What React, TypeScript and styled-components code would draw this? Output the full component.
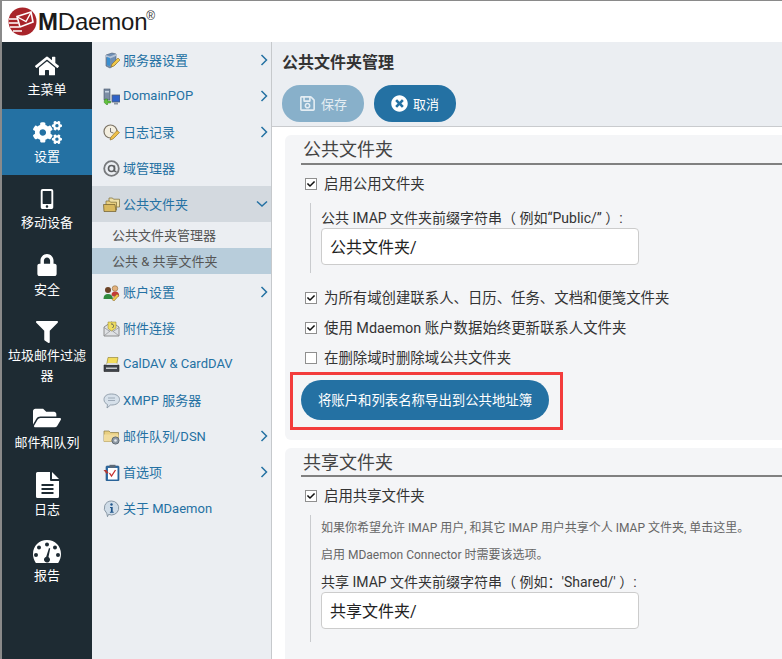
import styled, { createGlobalStyle } from "styled-components";
import type { ReactNode } from "react";
import {
  FaHome,
  FaCogs,
  FaMobileAlt,
  FaLock,
  FaFilter,
  FaFolderOpen,
  FaRegSave,
  FaTimesCircle,
  FaCheck,
} from "react-icons/fa";

const GlobalStyle = createGlobalStyle`
  html, body { margin: 0; padding: 0; background: #fff; }
  body {
    font-family: Roboto, "Noto Sans CJK SC", sans-serif;
    color: #333;
  }
  * { box-sizing: border-box; }
`;

const Page = styled.div`
  width: 782px;
  height: 659px;
  overflow: hidden;
  display: flex;
  flex-direction: column;
  border-top: 1px solid #8a8a8a;
  border-left: 2px solid #8a8a8a;
`;

const Header = styled.header`
  height: 41px;
  flex: none;
  display: flex;
  align-items: center;
  padding-left: 6px;
`;

const LogoText = styled.div`
  margin-left: 1px;
  font-family: "Liberation Sans", sans-serif;
  font-size: 24px;
  line-height: 28px;
  color: #1a1a1a;
  display: flex;
  letter-spacing: -0.2px;
  b { font-weight: 700; }
  sup {
    font-size: 12px;
    line-height: 12px;
    margin: 2px 0 0 -1px;
    color: #333;
  }
`;

const Body = styled.div`
  flex: 1;
  display: flex;
  min-height: 0;
`;

const Nav = styled.nav`
  width: 90px;
  flex: none;
  background: #1e2b33;
`;

const NavItem = styled.div<{ $active?: boolean }>`
  padding: 10px 0 8.6px;
  text-align: center;
  color: #fff;
  background: ${(p) => (p.$active ? "#2471a3" : "transparent")};
`;

const NavIcon = styled.div`
  height: 28px;
  padding-bottom: 1px;
  display: flex;
  align-items: center;
  justify-content: center;
  font-size: 24px;
`;

const NavLabel = styled.div`
  font-size: 13px;
  line-height: 20px;
`;

const Side = styled.aside`
  width: 180px;
  flex: none;
  background: #ebeef2;
  border-right: 1px solid #c6c9cc;
`;

const MenuRow = styled.div<{ $open?: boolean }>`
  height: 36px;
  display: flex;
  align-items: center;
  padding: 0 3px 0 11px;
  font-size: 13px;
  color: #2471a3;
  background: ${(p) => (p.$open ? "#d3d9df" : "transparent")};
`;

const MenuIcon = styled.svg`
  width: 17px;
  height: 17px;
  flex: none;
  margin-right: 3px;
`;

const MenuText = styled.span`
  flex: 1;
  margin-top: -2px;
`;

const SubRow = styled.div<{ $current?: boolean }>`
  height: 26px;
  display: flex;
  align-items: center;
  padding: 0 0 2px 20px;
  font-size: 13px;
  color: #555;
  background: ${(p) => (p.$current ? "#b8cddb" : "transparent")};
`;

const Main = styled.main`
  flex: 1;
  min-width: 0;
`;

const Toolbar = styled.div`
  height: 85px;
  background: #ebeef2;
  border-bottom: 1px solid #c9cbce;
  padding: 10px 10px 0;
`;

const Title = styled.h1`
  margin: 0 0 11px;
  font-size: 16px;
  line-height: 22px;
  font-weight: 700;
  color: #333;
`;

const Buttons = styled.div`
  display: flex;
  gap: 10px;
`;

const ToolButton = styled.button<{ $disabled?: boolean }>`
  width: 82px;
  height: 37px;
  border: 0;
  padding: 0;
  border-radius: 18px;
  display: flex;
  align-items: center;
  justify-content: center;
  gap: 5px;
  font: inherit;
  font-size: 13px;
  color: ${(p) => (p.$disabled ? "#e4edf3" : "#fff")};
  background: ${(p) => (p.$disabled ? "#88b0ca" : "#2471a3")};
  svg {
    font-size: 17px;
  }
`;

const Content = styled.div`
  padding: 8px 0 0 13px;
`;

const Section = styled.section<{ $h: number }>`
  height: ${(p) => p.$h}px;
  margin-bottom: 8px;
  padding-left: 16px;
  background: #f4f5f7;
  border-radius: 6px 0 0 6px;
`;

const SectionHead = styled.h2<{ $h: number }>`
  margin: 0;
  height: ${(p) => p.$h}px;
  border-bottom: 2px solid #808080;
  padding-left: 2px;
  font-size: 18px;
  line-height: 30px;
  font-weight: 400;
  color: #444;
`;

const CheckRow = styled.label<{ $gapTop: number }>`
  display: flex;
  align-items: center;
  gap: 7px;
  height: 20px;
  margin: ${(p) => p.$gapTop}px 0 0 4px;
  font-size: 14.4px;
  color: #333;
  span:last-child {
    margin-top: -3px;
  }
`;

const Box = styled.span`
  width: 12px;
  height: 12px;
  flex: none;
  display: flex;
  align-items: center;
  justify-content: center;
  background: #fff;
  border: 1px solid #8f8f8f;
  font-size: 8px;
  color: #111;
`;

const Indent = styled.div<{ $h: number; $top: number }>`
  height: ${(p) => p.$h}px;
  margin: ${(p) => p.$top}px 0 0 9px;
  padding-left: 10px;
  border-left: 1px solid #c9cbce;
`;

const FieldLabel = styled.div`
  padding-top: 5px;
  font-size: 14px;
  line-height: 20px;
  color: #333;
`;

const TextBox = styled.div`
  width: 318px;
  height: 37px;
  padding-left: 8px;
  background: #fff;
  border: 1px solid #ccc;
  border-radius: 4px;
  font-size: 16px;
  line-height: 37px;
  color: #222;
`;

const Hint = styled.p<{ $h: number }>`
  margin: 0;
  height: ${(p) => p.$h}px;
  font-size: 12px;
  line-height: 27px;
  color: #666;
  white-space: nowrap;
`;

const ExportButton = styled.button`
  position: relative;
  display: block;
  width: 248px;
  height: 40px;
  margin-top: 12px;
  padding: 0 0 2px;
  border: 0;
  border-radius: 20px;
  background: #2471a3;
  color: #fff;
  font: inherit;
  font-size: 13.4px;
  /* red note drawn over the screenshot */
  &::after {
    content: "";
    position: absolute;
    left: -11px;
    right: -14px;
    top: -8px;
    bottom: -10px;
    border: 3px solid #f33c3c;
  }
`;

const icons: Record<string, ReactNode> = {
  server: (
    <>
      <path d="M3 3 l6-2 l4 1 v10 l-6 4 l-4-2z" fill="#6f8fb5" stroke="#4a5a70" strokeWidth=".6" />
      <path d="M3 3 l4 1.500 l6-2.500 v2 l-6 2.500 l-4-1.500z" fill="#b5c4d8" />
      <path d="M4 5 l3 1 v8 l-3-1z" fill="#3a8fd0" />
      <path d="M8 15 l1-3 l6-6 l2 2 l-6 6z" fill="#f1c84a" stroke="#8a6a20" strokeWidth=".6" />
    </>
  ),
  domain: (
    <>
      <rect x="1" y="1" width="6" height="11" fill="#7d8ea6" stroke="#44546a" strokeWidth=".6" />
      <rect x="2" y="3" width="4" height="1.500" fill="#c8d4e2" />
      <rect x="9" y="7" width="8" height="7" fill="#2f62c8" stroke="#56606e" strokeWidth=".8" />
      <rect x="11" y="14.500" width="4" height="2" fill="#8b95a2" />
      <path d="M2 11 h2.500 v2 h3 v2 h-3 v2.500 l-3.500-3.200z" fill="#62c23e" stroke="#2f7d1e" strokeWidth=".5" />
    </>
  ),
  clock: (
    <>
      <circle cx="7.500" cy="7.500" r="6.500" fill="#f4efe0" stroke="#7c7466" strokeWidth="1.200" />
      <path d="M7.500 4 v4 l3 1" fill="none" stroke="#555" strokeWidth=".8" />
      <path d="M7 16 l1-3 l6-6.500 l2.500 2 l-6.500 6.500z" fill="#eec04a" stroke="#8a6a20" strokeWidth=".6" />
    </>
  ),
  at: (
    <>
      <circle cx="8.500" cy="8.500" r="7.300" fill="none" stroke="#77797c" strokeWidth="1.800" />
      <circle cx="8.500" cy="8.500" r="3" fill="none" stroke="#5c5e60" strokeWidth="1.600" />
      <path d="M11.500 5.500 v4.500 q0 2 2 1.500" fill="none" stroke="#5c5e60" strokeWidth="1.400" />
    </>
  ),
  folders: (
    <>
      <path d="M6 2 h3.500 l1 1.200 h6 v7.800 h-10.500z" fill="#efe0a6" stroke="#7b6a34" strokeWidth=".7" />
      <path d="M3 5 h3.500 l1 1.200 h6 v7.800 h-10.500z" fill="#e8cf80" stroke="#7b6a34" strokeWidth=".7" />
      <path d="M0.500 8.500 h11.500 l1 7 h-12z" fill="#d9b95e" stroke="#6b5a2a" strokeWidth=".7" />
    </>
  ),
  people: (
    <>
      <circle cx="5" cy="6" r="3" fill="#6b4226" />
      <path d="M0.500 15 q0-5 4.500-5 t5 5z" fill="#2f8a3e" />
      <circle cx="12" cy="4.500" r="2.800" fill="#e3b27d" stroke="#7b5a2a" strokeWidth=".5" />
      <path d="M8.500 11 q0-3.500 3.500-3.500 t4 3v2h-6z" fill="#c23b36" />
      <path d="M9 15.500 l5-5.500 l2 1.500 l-5 5.500z" fill="#f0c64a" stroke="#7a5f20" strokeWidth=".5" />
    </>
  ),
  attach: (
    <>
      <path d="M1 7 l7.500-5 l7.500 5 v9 h-15z" fill="#dfe1e4" stroke="#777" strokeWidth=".8" />
      <path d="M1.500 15.500 l6-5 h1.500 l6.500 5 M1 7.500 l6 4 M16 7.500 l-6 4" fill="none" stroke="#8c8f93" strokeWidth=".7" />
      <path d="M5 2 h8 v6 l-4.500 3 l-3.500-2.500z" fill="#eedd62" stroke="#8c7c2c" strokeWidth=".5" />
      <path d="M8 4 a2 2 0 0 1 2.500 2.500 l-1 1.500" fill="none" stroke="#555" strokeWidth=".9" />
    </>
  ),
  printer: (
    <>
      <path d="M5 1.500 h10 l-1.500 8 h-10z" fill="#f3dd5c" stroke="#8a7a2c" strokeWidth=".6" />
      <path d="M1 9 h15 v6.500 h-15z" fill="#3f434a" stroke="#222" strokeWidth=".6" />
      <path d="M3 9 l1.500-2 h9 l1.500 2z" fill="#d8dadd" />
      <rect x="3" y="11.500" width="11" height="1.500" fill="#c6c9cc" />
    </>
  ),
  bubble: (
    <>
      <path d="M8.500 2 c4.500 0 8 2 8 5.500 s-3.500 5.500-8 5.500 l-1 0 l-3.500 3 l.5-3.500 c-2-1-3.500-2.500-3.500-5 c0-3.500 3-5.500 7.500-5.500z" fill="#d6e0ea" stroke="#8b98a6" strokeWidth=".9" />
      <path d="M5 6 h7 M5 8.500 h7" stroke="#97a4b2" strokeWidth=".9" />
    </>
  ),
  queue: (
    <>
      <path d="M1 3 h5 l1.500 1.500 h8 v9 h-14.500z" fill="#e9d083" stroke="#8a7a44" strokeWidth=".7" />
      <path d="M1 6.500 h14.500 v7 h-14.500z" fill="#f1dc9d" />
      <circle cx="12.500" cy="12.500" r="3.600" fill="#8f9aa5" stroke="#59636d" strokeWidth=".9" />
      <circle cx="12.500" cy="12.500" r="1.300" fill="#e4e8ec" />
    </>
  ),
  prefs: (
    <>
      <rect x="3" y="2" width="13" height="15" rx="1" fill="#2f6ea8" stroke="#1d4a75" strokeWidth=".6" />
      <rect x="5" y="4" width="9.500" height="11.500" fill="#fff" />
      <rect x="6.500" y="0.800" width="6" height="3" fill="#5e6a78" />
      <path d="M6.500 9 l2 3 l4-6" fill="none" stroke="#c43030" strokeWidth="1.300" />
      <path d="M0.500 6 l3 0 l2 3 l-2 .8z" fill="#b03a34" />
    </>
  ),
  info: (
    <>
      <path d="M8.500 1 a7.300 7 0 1 1-3 13.400 l-1 2.300 l-.8-3.500 a7.300 7 0 0 1 4.800-12.200z" fill="#cfdce8" stroke="#7f8e9d" strokeWidth=".9" />
      <circle cx="8.500" cy="4.500" r="1.200" fill="#20568c" />
      <path d="M7 7 h2.700 v4.800 h1 v1 h-3.800 v-1 h1 v-3.800 h-.9z" fill="#20568c" />
    </>
  ),
};

function Gauge() {
  return (
    <svg width="28" height="23" viewBox="0 0 28 23">
      <path
        fill="#fff"
        fillRule="evenodd"
        d="M14 0 C6 0 0 6 0 14 c0 3 1 6 2.500 8.500 c.3 .4 .7 .5 1 .5 h21 c.3 0 .7-.1 1-.5 C27 20 28 17 28 14 C28 6 22 0 14 0z
        M14 2.500 a2 2 0 1 1 0 4 a2 2 0 1 1 0-4z
        M6 5.500 a2 2 0 1 1 0 4 a2 2 0 1 1 0-4z
        M22 5.500 a2 2 0 1 1 0 4 a2 2 0 1 1 0-4z
        M3 13 a2 2 0 1 1 0 4 a2 2 0 1 1 0-4z
        M25 13 a2 2 0 1 1 0 4 a2 2 0 1 1 0-4z
        M16 8 l1.200 .4 l-1.700 8.600 a3 3 0 1 1-2.300-.3z"
      />
    </svg>
  );
}

function FileIcon() {
  return (
    <svg width="23" height="26" viewBox="0 0 23 26">
      <path
        fill="#fff"
        fillRule="evenodd"
        d="M1.500 0 H14 V8 a1 1 0 0 0 1 1 H23 V24.500 a1.500 1.500 0 0 1-1.500 1.500 H1.500 A1.500 1.500 0 0 1 0 24.500 V1.500 A1.500 1.500 0 0 1 1.500 0z
        M5.500 12 v2 h12 v-2z M5.500 16 v2 h12 v-2z M5.500 20 v2 h12 v-2z"
      />
      <path fill="#fff" d="M16 0 L23 7 H16z" />
    </svg>
  );
}

function Logo() {
  return (
    <svg width="29" height="29" viewBox="0 0 29 29">
      <circle cx="14.500" cy="14.500" r="14" fill="#a8242a" />
      <path d="M9 9.500 L23 5 L25 15 L12 20z" fill="none" stroke="#fff" strokeWidth="1.600" />
      <path d="M9.500 10 L18 14.500 L23 5.500" fill="none" stroke="#fff" strokeWidth="1.400" />
      <path d="M1 12 H9 M1 16 H10 M2 20 H11 M5 24 H14" stroke="#fff" strokeWidth="1.700" />
    </svg>
  );
}

function ChevronRight() {
  return (
    <svg width="8" height="12" viewBox="0 0 8 12">
      <path d="M1.500 1 L6.500 6 L1.500 11" fill="none" stroke="#2471a3" strokeWidth="1.500" />
    </svg>
  );
}

function ChevronDown() {
  return (
    <svg width="12" height="8" viewBox="0 0 12 8">
      <path d="M1 1.500 L6 6 L11 1.500" fill="none" stroke="#2471a3" strokeWidth="1.500" />
    </svg>
  );
}

type MenuEntry = { icon: string; label: string; arrow?: boolean };

const menuTop: MenuEntry[] = [
  { icon: "server", label: "服务器设置", arrow: true },
  { icon: "domain", label: "DomainPOP", arrow: true },
  { icon: "clock", label: "日志记录", arrow: true },
  { icon: "at", label: "域管理器" },
];

const menuBottom: MenuEntry[] = [
  { icon: "people", label: "账户设置", arrow: true },
  { icon: "attach", label: "附件连接" },
  { icon: "printer", label: "CalDAV & CardDAV" },
  { icon: "bubble", label: "XMPP 服务器" },
  { icon: "queue", label: "邮件队列/DSN", arrow: true },
  { icon: "prefs", label: "首选项", arrow: true },
  { icon: "info", label: "关于 MDaemon" },
];

function Menu({ icon, label, arrow }: MenuEntry) {
  return (
    <MenuRow>
      <MenuIcon viewBox="0 0 17 17">{icons[icon]}</MenuIcon>
      <MenuText>{label}</MenuText>
      {arrow && <ChevronRight />}
    </MenuRow>
  );
}

function Check({ on, top, children }: { on?: boolean; top: number; children: ReactNode }) {
  return (
    <CheckRow $gapTop={top}>
      <Box>{on && <FaCheck />}</Box>
      <span>{children}</span>
    </CheckRow>
  );
}

export default function App() {
  return (
    <Page>
      <GlobalStyle />
      <Header>
        <Logo />
        <LogoText>
          <span>
            <b>M</b>Daemon
          </span>
          <sup>®</sup>
        </LogoText>
      </Header>
      <Body>
        <Nav>
          <NavItem>
            <NavIcon><FaHome /></NavIcon>
            <NavLabel>主菜单</NavLabel>
          </NavItem>
          <NavItem $active>
            <NavIcon><FaCogs size={29} /></NavIcon>
            <NavLabel>设置</NavLabel>
          </NavItem>
          <NavItem>
            <NavIcon><FaMobileAlt size={20} /></NavIcon>
            <NavLabel>移动设备</NavLabel>
          </NavItem>
          <NavItem>
            <NavIcon><FaLock size={22} /></NavIcon>
            <NavLabel>安全</NavLabel>
          </NavItem>
          <NavItem>
            <NavIcon><FaFilter size={22} /></NavIcon>
            <NavLabel>垃圾邮件过滤器</NavLabel>
          </NavItem>
          <NavItem>
            <NavIcon><FaFolderOpen size={28} /></NavIcon>
            <NavLabel>邮件和队列</NavLabel>
          </NavItem>
          <NavItem>
            <NavIcon><FileIcon /></NavIcon>
            <NavLabel>日志</NavLabel>
          </NavItem>
          <NavItem>
            <NavIcon><Gauge /></NavIcon>
            <NavLabel>报告</NavLabel>
          </NavItem>
        </Nav>
        <Side>
          {menuTop.map((m) => (
            <Menu key={m.label} {...m} />
          ))}
          <MenuRow $open>
            <MenuIcon viewBox="0 0 17 17">{icons.folders}</MenuIcon>
            <MenuText>公共文件夹</MenuText>
            <ChevronDown />
          </MenuRow>
          <SubRow>公共文件夹管理器</SubRow>
          <SubRow $current>公共 &amp; 共享文件夹</SubRow>
          {menuBottom.map((m) => (
            <Menu key={m.label} {...m} />
          ))}
        </Side>
        <Main>
          <Toolbar>
            <Title>公共文件夹管理</Title>
            <Buttons>
              <ToolButton $disabled>
                <FaRegSave />
                保存
              </ToolButton>
              <ToolButton>
                <FaTimesCircle />
                取消
              </ToolButton>
            </Buttons>
          </Toolbar>
          <Content>
            <Section $h={305}>
              <SectionHead $h={30}>公共文件夹</SectionHead>
              <Check on top={9}>启用公用文件夹</Check>
              <Indent $h={70} $top={9}>
                <FieldLabel>公共 IMAP 文件夹前缀字符串（ 例如“Public/” ）:</FieldLabel>
                <TextBox>公共文件夹/</TextBox>
              </Indent>
              <Check on top={15}>为所有域创建联系人、日历、任务、文档和便笺文件夹</Check>
              <Check on top={10}>使用 Mdaemon 账户数据始终更新联系人文件夹</Check>
              <Check top={10}>在删除域时删除域公共文件夹</Check>
              <ExportButton>将账户和列表名称导出到公共地址簿</ExportButton>
            </Section>
            <Section $h={300}>
              <SectionHead $h={29}>共享文件夹</SectionHead>
              <Check on top={9}>启用共享文件夹</Check>
              <Indent $h={127} $top={9}>
                <Hint $h={27}>如果你希望允许 IMAP 用户, 和其它 IMAP 用户共享个人 IMAP 文件夹, 单击这里。</Hint>
                <Hint $h={25}>启用 MDaemon Connector 时需要该选项。</Hint>
                <FieldLabel>共享 IMAP 文件夹前缀字符串（ 例如：'Shared/' ）:</FieldLabel>
                <TextBox>共享文件夹/</TextBox>
              </Indent>
            </Section>
          </Content>
        </Main>
      </Body>
    </Page>
  );
}
